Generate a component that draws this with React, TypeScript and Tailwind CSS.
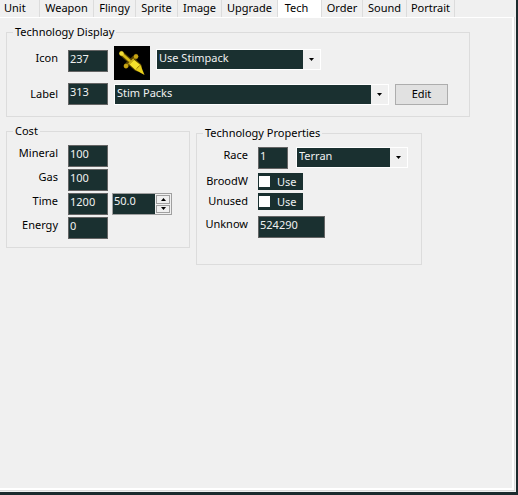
import React, { useState } from "react";

const tabs = [
    { name: "Unit", width: "w-10 pl-1 text-left" },
    { name: "Weapon", width: "w-[54px]" },
    { name: "Flingy", width: "w-[42px]" },
    { name: "Sprite", width: "w-[42px]" },
    { name: "Image", width: "w-11" },
    { name: "Upgrade", width: "w-14" },
    { name: "Tech", width: "w-11 pr-1.5" },
    { name: "Order", width: "w-[41px]" },
    { name: "Sound", width: "w-11" },
    { name: "Portrait", width: "w-12" },
];

function TabBar({ active, onSelect }: { active: string; onSelect: (name: string) => void }) {
    return (
        <div role="tablist" className="flex h-[17px]">
            {tabs.map((tab) => (
                <button
                    key={tab.name}
                    role="tab"
                    aria-selected={tab.name === active}
                    onClick={() => onSelect(tab.name)}
                    className={`${tab.width} shrink-0 whitespace-nowrap border-r border-[#dcdcdc] ${
                        tab.name === active ? "h-[18px] bg-white pb-1.5" : "h-[17px] bg-[#f0f0f0] pb-px"
                    }`}
                >
                    {tab.name}
                </button>
            ))}
        </div>
    );
}

function Group({ title, className, children }: { title: string; className: string; children: React.ReactNode }) {
    return (
        <fieldset className={`min-w-0 border border-[#dcdcdc] pt-1.5 ${className}`}>
            <legend className="ml-1.5 px-0.5">{title}</legend>
            {children}
        </fieldset>
    );
}

function RowLabel({ htmlFor, children }: { htmlFor: string; children: React.ReactNode }) {
    return (
        <label htmlFor={htmlFor} className="w-[51px] shrink-0 text-right">
            {children}
        </label>
    );
}

function NumberBox({ id, value, width = "w-10" }: { id: string; value: string; width?: string }) {
    return (
        <input
            id={id}
            defaultValue={value}
            className={`${width} block h-[22px] shrink-0 border border-[#646464] bg-[#1a3030] px-px pb-1.5 text-[#f0f0f0] outline-none`}
        />
    );
}

function DropDown({ id, label, value, className }: { id: string; label: string; value: string; className: string }) {
    return (
        <div className={`relative h-[21px] ${className}`}>
            <select
                id={id}
                aria-label={label}
                className="block h-full w-full appearance-none border border-white bg-[#1a3030] pb-1 pl-0.5 text-[#f0f0f0] outline-none"
            >
                <option>{value}</option>
            </select>
            <span className="pointer-events-none absolute inset-y-px right-px flex w-[17px] items-center justify-center bg-[#f0f0f0]">
                <svg width="5" height="3" viewBox="0 0 5 3">
                    <path d="M0 0h5L2.5 3z" fill="#000" />
                </svg>
            </span>
        </div>
    );
}

function SpinBox({ value }: { value: string }) {
    return (
        <div className="flex h-[22px] w-[60px] shrink-0 border border-[#a0a0a0] bg-[#f0f0f0]">
            <input
                aria-label="Time in seconds"
                defaultValue={value}
                className="w-[42px] bg-[#1a3030] pb-1.5 pl-px text-[#f0f0f0] outline-none"
            />
            <div className="flex flex-1 flex-col gap-px p-px">
                <button aria-label="Increase" className="flex flex-1 items-center justify-center border border-[#a0a0a0]">
                    <svg width="5" height="3" viewBox="0 0 5 3">
                        <path d="M0 3h5L2.5 0z" fill="#000" />
                    </svg>
                </button>
                <button aria-label="Decrease" className="flex flex-1 items-center justify-center border border-[#a0a0a0]">
                    <svg width="5" height="3" viewBox="0 0 5 3">
                        <path d="M0 0h5L2.5 3z" fill="#000" />
                    </svg>
                </button>
            </div>
        </div>
    );
}

function UseCheck({ id }: { id: string }) {
    return (
        <label className="flex h-[17px] w-[45px] items-center gap-[7px] bg-[#1a3030] pl-px text-[#f0f0f0]">
            <input id={id} type="checkbox" className="h-[11px] w-[11px] shrink-0 appearance-none bg-white checked:bg-[#7ab8b8]" />
            Use
        </label>
    );
}

function StimIcon() {
    return (
        <svg width="36" height="34" viewBox="0 0 36 34" className="shrink-0 bg-black">
            <g stroke="#5a4600" strokeLinecap="round" fill="none">
                <path d="M7.500 7.500l10 9" strokeWidth="5" />
                <path d="M12 20l10-9.500" strokeWidth="5" />
                <path d="M18.500 16.500l5 4.500" strokeWidth="9" />
            </g>
            <path d="M7.500 7.500l9 8" stroke="#d9bd18" strokeWidth="2.500" />
            <path d="M12 20l10-9.500" stroke="#8a6d08" strokeWidth="1.500" />
            <path d="M14.500 17.500l4.500-4.500 7.500 6-5 5z" fill="#f4e02c" />
            <path d="M15.500 18l4-4" stroke="#a88a0c" strokeWidth="1" />
            <path d="M21.500 24l5-5 4 10z" fill="#e8cf1c" />
            <path d="M22.500 22.500l3-3" stroke="#a88a0c" strokeWidth="1" />
            <circle cx="7.500" cy="7.500" r="2.200" fill="#f0dc38" />
            <circle cx="12" cy="20" r="2.200" fill="#c6a414" />
            <circle cx="22" cy="10.500" r="2.200" fill="#c6a414" />
        </svg>
    );
}

export default function App() {
    const [active, setActive] = useState("Tech");

    return (
        <div className="flex min-h-screen flex-col border-r-2 border-b-3 border-[#1c2b2e] bg-[#f0f0f0] font-['Noto_Sans',sans-serif] text-[11px]/4 text-black">
            <TabBar active={active} onSelect={setActive} />
            <main className="mr-px mb-px flex flex-1 flex-col border-r border-b border-[#dcdcdc]">
                <div className="flex-1 border-t border-r-2 border-b-2 border-white pt-1.5 pr-[42px] pl-1.5">
                    <Group title="Technology Display" className="pb-[11px]">
                        <div className="flex items-start">
                            <div className="flex pt-1">
                                <RowLabel htmlFor="icon">Icon</RowLabel>
                            </div>
                            <div className="ml-2.5 flex flex-1 gap-1.5">
                                <div className="pt-1">
                                    <NumberBox id="icon" value="237" />
                                </div>
                                <StimIcon />
                                <DropDown id="icon-name" label="Icon name" value="Use Stimpack" className="mt-[3px] w-[165px]" />
                            </div>
                        </div>
                        <div className="mt-[3px] flex items-center pr-[21px]">
                            <RowLabel htmlFor="label">Label</RowLabel>
                            <div className="ml-2.5 flex flex-1 items-end gap-1.5">
                                <NumberBox id="label" value="313" />
                                <DropDown id="label-name" label="Label name" value="Stim Packs" className="flex-1" />
                                <button className="h-[21px] w-[53px] border border-[#adadad] bg-[#e1e1e1] pb-px">Edit</button>
                            </div>
                        </div>
                    </Group>

                    <div className="mt-1.5 mr-12 grid grid-cols-[184fr_226fr] items-start gap-1.5">
                        <Group title="Cost" className="pb-2">
                            <div className="flex flex-col gap-0.5">
                                <div className="flex gap-2.5">
                                    <RowLabel htmlFor="mineral">Mineral</RowLabel>
                                    <NumberBox id="mineral" value="100" />
                                </div>
                                <div className="flex gap-2.5">
                                    <RowLabel htmlFor="gas">Gas</RowLabel>
                                    <NumberBox id="gas" value="100" />
                                </div>
                                <div className="flex gap-2.5">
                                    <RowLabel htmlFor="time">Time</RowLabel>
                                    <div className="flex gap-1">
                                        <NumberBox id="time" value="1200" />
                                        <SpinBox value="50.0" />
                                    </div>
                                </div>
                                <div className="flex gap-2.5">
                                    <RowLabel htmlFor="energy">Energy</RowLabel>
                                    <NumberBox id="energy" value="0" />
                                </div>
                            </div>
                        </Group>

                        <Group title="Technology Properties" className="mt-0.5 pb-[26px]">
                            <div className="flex gap-2.5">
                                <RowLabel htmlFor="race">Race</RowLabel>
                                <div className="flex gap-2">
                                    <NumberBox id="race" value="1" width="w-[30px]" />
                                    <DropDown id="race-name" label="Race name" value="Terran" className="w-[112px]" />
                                </div>
                            </div>
                            <div className="mt-1 flex gap-2.5">
                                <RowLabel htmlFor="broodwar">BroodW</RowLabel>
                                <UseCheck id="broodwar" />
                            </div>
                            <div className="mt-[3px] flex gap-2.5">
                                <RowLabel htmlFor="unused">Unused</RowLabel>
                                <UseCheck id="unused" />
                            </div>
                            <div className="mt-1.5 flex gap-2.5">
                                <RowLabel htmlFor="unknown">Unknow</RowLabel>
                                <NumberBox id="unknown" value="524290" width="w-[67px]" />
                            </div>
                        </Group>
                    </div>
                </div>
            </main>
        </div>
    );
}
